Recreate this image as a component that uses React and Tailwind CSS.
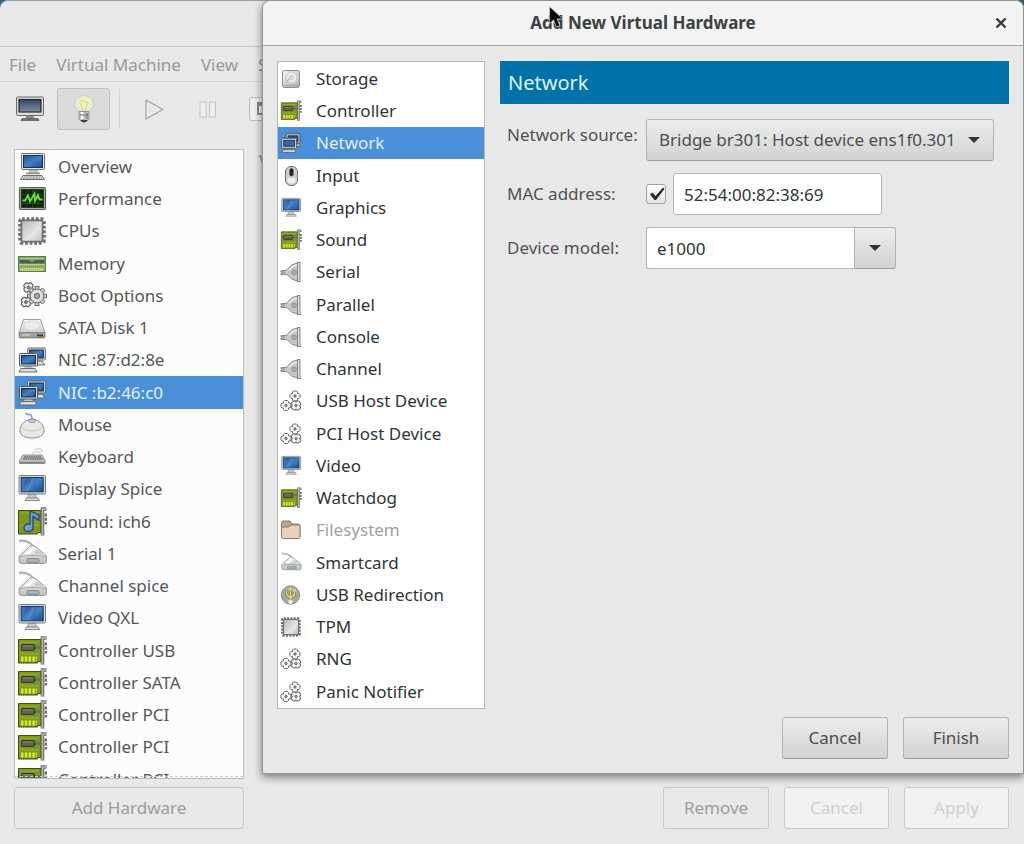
import React, { useState } from 'react';

/* ---------- Icons ---------- */

const Defs = () => (
    <svg width="0" height="0" className="absolute" aria-hidden="true">
        <defs>
            <linearGradient id="screen" x1="0" y1="0" x2="1" y2="1">
                <stop offset="0" stopColor="#1f4f93" />
                <stop offset="0.5" stopColor="#4580c4" />
                <stop offset="1" stopColor="#1d4a8c" />
            </linearGradient>
            <linearGradient id="metal" x1="0" y1="0" x2="1" y2="1">
                <stop offset="0" stopColor="#f6f6f5" />
                <stop offset="1" stopColor="#b5b6b3" />
            </linearGradient>
            <linearGradient id="chip" x1="0" y1="0" x2="1" y2="1">
                <stop offset="0" stopColor="#b4b5b3" />
                <stop offset="0.6" stopColor="#e6e6e5" />
                <stop offset="1" stopColor="#bcbdbb" />
            </linearGradient>
            <linearGradient id="shell" x1="0" y1="0" x2="0" y2="1">
                <stop offset="0" stopColor="#f2f2f2" />
                <stop offset="1" stopColor="#bfc1c1" />
            </linearGradient>
            <linearGradient id="slate" x1="0" y1="0" x2="0" y2="1">
                <stop offset="0" stopColor="#34465e" />
                <stop offset="1" stopColor="#7f8da2" />
            </linearGradient>
        </defs>
    </svg>
);

const Svg = ({ size = 28, box = 28, children }) => (
    <svg width={size} height={size} viewBox={`0 0 ${box} ${box}`} className="shrink-0 overflow-visible" aria-hidden="true">
        {children}
    </svg>
);

const ComputerIcon = () => (
    <Svg>
        <rect x="3.5" y="0.5" width="23" height="16" rx="1" fill="#dfe2e0" stroke="#6f7471" />
        <rect x="5.5" y="2.5" width="19" height="12" fill="url(#screen)" stroke="#16335f" />
        <path d="M12 17h7l1 3h-9z" fill="#c9cbc8" stroke="#888a85" strokeWidth="0.7" />
        <path d="M8 20.5h14" stroke="#8f918d" strokeWidth="1.3" />
        <path d="M5 22.5h19l2.5 4h-24z" fill="#d5d7d3" stroke="#6f716d" />
        <path d="M6 24h17M5 25.3h19" stroke="#8a8c88" strokeWidth="0.8" strokeDasharray="2 1" />
    </Svg>
);

const PerformanceIcon = () => (
    <Svg>
        <rect x="1.5" y="2.5" width="26" height="22" rx="1.5" fill="#a9aca8" stroke="#585b57" strokeWidth="1.2" />
        <rect x="3.5" y="4.5" width="22" height="18" fill="#0d2609" stroke="#2c3a29" />
        <path d="M4 9.5h21M4 14h21M4 18.5h21M9 5v17M14.5 5v17M20 5v17" stroke="#1f5a15" strokeWidth="0.7" />
        <path d="M4.500 15.500h2.500l3-5 2 6 4.500-8 .5 7.500 3-6 1.500 4.500h3" fill="none" stroke="#6fe03a" strokeWidth="1.800" />
    </Svg>
);

const ChipIcon = ({ size = 28 }) => (
    <Svg size={size}>
        <rect x="2" y="2" width="24" height="24" rx="2" fill="#cfd0ce" stroke="#70726f" strokeWidth="3.600" strokeDasharray="2.800 1.800" />
        <rect x="3.500" y="3.500" width="21" height="21" rx="1.500" fill="url(#chip)" stroke="#70726f" strokeWidth="1.600" />
    </Svg>
);

const MemoryIcon = () => (
    <Svg>
        <rect x="0.5" y="6.5" width="27" height="15" fill="#86ad68" stroke="#56804a" />
        <path d="M3 8.5h22" stroke="#a9c98a" />
        <rect x="1.500" y="10" width="25" height="3.500" fill="#4f594c" />
        <path d="M11 10h6l-3 2.500z" fill="#7fa663" />
        <path d="M1 14.500h26" stroke="#b4d492" strokeWidth="1.200" />
        <path d="M2 19.500h24" stroke="#d9d277" strokeWidth="3" strokeDasharray="1.500 .5" />
    </Svg>
);

const Gear = ({ x, y, r, teeth = 8 }) => (
    <g transform={`translate(${x} ${y})`}>
        {Array.from({ length: teeth }, (_, i) => (
            <rect
                key={i}
                x={-r * 0.2}
                y={-r}
                width={r * 0.4}
                height={r * 0.5}
                transform={`rotate(${(i * 360) / teeth})`}
                fill="#d4d5d3"
                stroke="#5a5c59"
                strokeWidth="0.9"
            />
        ))}
        <circle r={r * 0.72} fill="#dfe0de" stroke="#5a5c59" strokeWidth="0.900" />
        <circle r={r * 0.650} fill="#dfe0de" />
        <circle r={r * 0.280} fill="#a7a9a6" stroke="#5a5c59" strokeWidth="0.900" />
    </g>
);

const petals = 'M-1.500-5h3l1 1v1.500h1.500l1 1v3l-1 1h-1.500v1.500l-1 1h-3l-1-1v-1.500h-1.500l-1-1v-3l1-1h1.500v-1.500z';

const GearsIcon = () => (
    <Svg>
        <g fill="#ecedeb" stroke="#5f615e">
            <path d={petals} transform="translate(10.500 5.500) rotate(45)" strokeWidth="1.100" />
            <path d={petals} transform="translate(8 20) rotate(45)" strokeWidth="1.100" />
        </g>
        <circle cx="10.500" cy="5.500" r="1.500" fill="#9c9e9b" stroke="#5f615e" />
        <circle cx="8" cy="20" r="1.500" fill="#9c9e9b" stroke="#5f615e" />
        <Gear x={19} y={14} r={9.500} />
    </Svg>
);

const SmallGearsIcon = () => (
    <Svg size={20} box={20}>
        {[[14, 5, 0], [5, 14.5, 0], [15, 14.5, 45]].map(([x, y, turn]) => (
            <g key={x} transform={`translate(${x} ${y}) rotate(${turn})`}>
                <path d={petals} fill="#f3f3f2" stroke="#6c6e6b" strokeWidth="1" />
                <circle r="1.200" fill="#a2a4a1" stroke="#5c5e5b" strokeWidth="0.800" />
            </g>
        ))}
    </Svg>
);

const DiskIcon = () => (
    <Svg>
        <path d="M5.500 5.500h17l4.500 13v4.500q0 1-1 1h-24q-1 0-1-1v-4.500z" fill="url(#shell)" stroke="#9a9c99" />
        <path d="M1.500 18.500h25v4q0 1-1 1h-23q-1 0-1-1z" fill="#a0a29e" stroke="#7d7f7c" strokeWidth="0.800" />
        <ellipse cx="14" cy="11.500" rx="8" ry="4.500" fill="#ececeb" stroke="#cfd0ce" strokeWidth="0.700" />
        <path d="M19 21.500h6" stroke="#3c3c3c" strokeWidth="2" />
        <path d="M4 21h8" stroke="#d8d8d8" />
    </Svg>
);

const NicIcon = () => (
    <Svg>
        <path d="M17 15.500l7-.5 3 4h-9z" fill="#dcdedb" stroke="#6b6d6a" />
        <rect x="9.700" y="2" width="17.600" height="12" rx="1" fill="#dfe3dd" stroke="#5e6564" />
        <rect x="11.700" y="4" width="13.600" height="8" fill="url(#screen)" stroke="#16294c" />
        <path d="M7 20h7l1 2.500h-9z" fill="#c4c6c3" />
        <rect x="1.500" y="7.500" width="18" height="12.500" rx="1" fill="#e3e6df" stroke="#4f5655" />
        <rect x="3.500" y="9.500" width="14" height="8.500" fill="url(#screen)" stroke="#16294c" />
        <path d="M3 22.500h14l2 3.500h-18z" fill="#dddfdb" stroke="#676966" />
    </Svg>
);

const SmallNicIcon = () => (
    <Svg size={20} box={20}>
        <path d="M13 11h5l1.500 2.500h-6z" fill="#dcdedb" stroke="#55595a" strokeWidth="0.800" />
        <rect x="5" y="0.800" width="14" height="9.500" rx="0.800" fill="#d5dade" stroke="#4a5157" />
        <rect x="7" y="2.800" width="10" height="6" fill="#27508c" stroke="#16294c" strokeWidth="0.800" />
        <rect x="0.700" y="5.200" width="15" height="10" rx="0.800" fill="#e3e6df" stroke="#4a5157" />
        <rect x="2.700" y="7.200" width="11" height="6" fill="#3566a8" stroke="#16294c" strokeWidth="0.900" />
        <path d="M2 16.800h12l1 2.500h-14z" fill="#e6e7e4" stroke="#5c5e5b" strokeWidth="0.900" />
    </Svg>
);

const MouseIcon = () => (
    <Svg>
        <path d="M7.500 2q1.500 2 4 1.500t2.500 5" fill="none" stroke="#7f9fc0" strokeWidth="1.600" />
        <path d="M14 8c6 0 12 5.500 12 11s-5 8-12 8-12-2.500-12-8 6-11 12-11z" fill="#e9e9e8" stroke="#8f918e" />
        <path d="M4 17q10 6 20 0M14 8.500v3" fill="none" stroke="#c2c3c1" strokeWidth="0.900" />
        <path d="M10.500 9q3.500-2 7 0l-1 2.500h-5z" fill="#b6cbe0" stroke="#7694b4" strokeWidth="0.700" />
    </Svg>
);

const KeyboardIcon = () => (
    <Svg>
        <path d="M14 11q1-3 6-2t4-3h-8" fill="none" stroke="#c6c7c5" strokeWidth="1" />
        <path d="M5 12h19l3 5.500v3h-25.500v-3z" fill="#c2c3c1" stroke="#858784" strokeWidth="0.900" />
        <path d="M6 14h17M5 16h19.500" stroke="#6b6d6a" strokeWidth="1.400" strokeDasharray="1.800 .5" />
        <path d="M2 19.500h24.500" stroke="#858784" strokeWidth="1.600" />
    </Svg>
);

const MonitorIcon = ({ size = 28 }) => (
    <Svg size={size}>
        <path d="M10.500 19h7l1 4.500h-9z" fill="#c9cbc8" stroke="#8a8c89" strokeWidth="0.800" />
        <path d="M8.500 23h11.500l1.500 2.500h-14.500z" fill="#dcdddb" stroke="#7d7f7c" strokeWidth="0.900" />
        <rect x="1" y="0.500" width="26.500" height="18.500" rx="1.200" fill="#d5dad9" stroke="#747d80" />
        <rect x="3.200" y="2.500" width="22" height="14.300" fill="url(#screen)" stroke="#173967" />
        <path d="M8 3l-4 9v-9zM17 3l-6 13h-3l6-13z" fill="#6aa2df" opacity="0.350" />
    </Svg>
);

const CardIcon = ({ size = 28, note = false }) => (
    <Svg size={size}>
        <path d="M0.500 2.500h22.500v22h-3.500v1.500h-19z" fill="#7f981f" stroke="#3f4f12" />
        <path d="M2 5h19M2 17h19" stroke="#9ab32c" strokeWidth="1" />
        {note ? (
            <path d="M12 3l9 4v5l-6-3.500v11q0 4-4.500 4t-4.500-3.500 4-4h2z" fill="#6f9fd2" stroke="#24497c" strokeWidth="1.300" />
        ) : (
            <>
                <rect x="3.500" y="7.500" width="13" height="6" rx="0.800" fill="#5d6057" stroke="#2f3520" />
                <path d="M5 9h10" stroke="#8b8e84" />
                <path d="M17 10.500h5" stroke="#49755c" strokeWidth="2" />
                <path d="M3 22h16" stroke="#dbe836" strokeWidth="5" strokeDasharray="2.500 1.300" />
            </>
        )}
        <path d="M28.500 1h-4v26.500" fill="none" stroke="#6b6d69" strokeWidth="3.600" />
        <path d="M28.500 1h-4v26" fill="none" stroke="#b4b6b2" strokeWidth="1.500" />
        <path d="M27.800 5.500v11" stroke="#6b6d6a" strokeWidth="2.400" strokeDasharray="3 1.200" />
    </Svg>
);

const ModemIcon = ({ size = 28 }) => (
    <Svg size={size}>
        <path d="M1 1q8-1 12 3t6 7" fill="none" stroke="#b4b6b5" strokeWidth="2.400" />
        <path d="M12 6q3-1.500 6 1l8.500 7q2 1.500 2 4v3q0 2.500-2.500 2.500h-22.500q-2.500 0-2.500-2.500v-3q0-2.500 2-3.500z" fill="url(#shell)" stroke="#989a99" />
        <path d="M1.500 17q13-3 26.500 0" fill="none" stroke="#a2a5a6" strokeWidth="1.200" />
        <path d="M13.500 8l2.500 1.500-4 4.500-7 .5z" fill="#fafafa" />
        <path d="M18 9q5 3 7 5.500l-8-.5z" fill="#c9cbcb" />
        <rect x="9" y="18.500" width="12" height="4" rx="1" fill="#a3b1c0" stroke="#7b8894" strokeWidth="0.900" />
    </Svg>
);

const StorageIcon = () => (
    <Svg size={20} box={20}>
        <rect x="1.500" y="1.500" width="17" height="17" rx="2" fill="url(#metal)" stroke="#8b8d8a" />
        <circle cx="10.500" cy="8.500" r="5.500" fill="#ededec" stroke="#c6c7c5" />
        <circle cx="10.500" cy="8.500" r="2" fill="#dcdddb" stroke="#b5b5b5" strokeWidth="0.700" />
        <path d="M5 13.500l3.500-4" stroke="#b5b5b5" strokeWidth="1.200" />
        <path d="M3 16.500h14" stroke="#a5a6a4" strokeWidth="1.500" />
    </Svg>
);

const InputIcon = () => (
    <Svg size={20} box={20}>
        <rect x="4.500" y="0.500" width="12" height="19" rx="5.500" fill="#cfd0ce" stroke="#6d6f6c" />
        <path d="M6.500 12v2q0 3.500 4 3.500t4-3.500v-2z" fill="#f1f1f0" />
        <rect x="8.700" y="2.500" width="3.600" height="7.500" rx="1.600" fill="#1e1e1e" stroke="#5d5f5c" strokeWidth="0.700" />
    </Svg>
);

const PlugIcon = () => (
    <Svg size={20} box={20}>
        <path d="M0 8.500h5l1.500-1.500q4-5.500 10-6v18q-6-.5-10-6l-1.500-.5h-5v-1.500h3.500v-1h-3.500z" fill="#c6c7c5" stroke="#8b8d8a" />
        <path d="M8 8q4-4.500 8-5" fill="none" stroke="#efefee" strokeWidth="1.400" />
        <circle cx="13" cy="10.500" r="2.500" fill="#a9aba8" stroke="#8b8d8a" strokeWidth="0.700" />
        <rect x="16.500" y="0.500" width="2.500" height="19" fill="#dcdddb" stroke="#858784" />
    </Svg>
);

const FolderIcon = () => (
    <Svg size={20} box={20}>
        <path d="M0.500 16.500v-14q0-1.500 1.500-1.500h7l2 3h6.500q1.500 0 1.500 1.500v11z" fill="#b9a588" stroke="#8d7c66" />
        <path d="M0.500 8.500q0-1.500 1.500-1.500h6l2-2h7.500q1.500 0 1.500 1.500v10.500q0 1.500-1.500 1.500h-15.500q-1.500 0-1.500-1.500z" fill="#e5d2b8" stroke="#907e68" />
    </Svg>
);

const UsbIcon = () => (
    <Svg size={20} box={20}>
        <circle cx="9.500" cy="10" r="9.200" fill="#a7a8a2" stroke="#8a8b86" />
        <path d="M9.500 4v12.500M5.500 5.500v4l4 3.500M13.500 5v4.500l-4 3.500" fill="none" stroke="#7a7443" strokeWidth="3" />
        <path d="M9.500 4v12.500M5.500 5.500v4l4 3.500M13.500 5v4.500l-4 3.500" fill="none" stroke="#ddd07a" strokeWidth="1.700" />
        <path d="M9.500 1.500l2.200 3.500h-4.400z" fill="#ddd07a" />
        <circle cx="9.500" cy="16.800" r="2.200" fill="#f6f3da" />
        <path d="M12 4h3v2.500h-3z" fill="#ddd07a" />
    </Svg>
);

const ConsoleIcon = () => (
    <Svg>
        <rect x="0.500" y="2" width="27" height="18.500" rx="1" fill="#dcdddb" stroke="#6b6d6a" />
        <rect x="3" y="4.500" width="22" height="12.500" fill="url(#slate)" stroke="#262d38" strokeWidth="1.200" />
        <path d="M10 21h8v2.500h-8z" fill="#8b8d8a" />
        <path d="M6 23.500h16l1 2h-18z" fill="#70726f" stroke="#565855" strokeWidth="0.700" />
    </Svg>
);

const BulbIcon = () => (
    <Svg>
        <path d="M14 0.500c5.500 0 9.500 4 9.500 8.500 0 4-3 5.500-4.500 8h-10c-1.500-2.500-4.500-4-4.500-8 0-4.500 4-8.500 9.500-8.500z" fill="#e8e8dd" stroke="#c6c6bb" strokeWidth="0.900" />
        <circle cx="14" cy="8" r="5.500" fill="#f5f4b0" />
        <path d="M10 6.500q2-2 4 0t4 0M10.500 8l2.500 8M17.500 8l-2.500 8" fill="none" stroke="#cdc98e" strokeWidth="0.900" />
        <path d="M9 16.500h10v7q0 2.500-5 2.500t-5-2.500z" fill="#bfc0be" stroke="#858784" strokeWidth="0.800" />
        <path d="M12 17v7" stroke="#fafafa" strokeWidth="2.500" />
        <path d="M17 18v6M10 20h8" stroke="#6d6f6c" strokeWidth="1" />
        <path d="M10.500 25h7q-1 2.500-3.500 2.500t-3.500-2.500z" fill="#3d3f3c" />
    </Svg>
);

const PlayIcon = () => (
    <Svg>
        <path d="M6 5l17 9.500-17 9.500z" fill="#e4e4e3" stroke="#a2a39f" strokeWidth="1.200" strokeLinejoin="round" />
        <path d="M8 8.500l11 6-11 6z" fill="none" stroke="#f6f6f5" />
    </Svg>
);

const PauseIcon = () => (
    <Svg>
        <rect x="6" y="7" width="6" height="15" fill="#efefee" stroke="#c2c3c1" />
        <rect x="15.500" y="7" width="6" height="15" fill="#efefee" stroke="#c2c3c1" />
    </Svg>
);

const Caret = () => (
    <svg width="12" height="6" viewBox="0 0 12 6" aria-hidden="true">
        <path d="M0 0h12l-6 6z" fill="#2e3436" />
    </svg>
);

/* ---------- Data ---------- */

const devices = [
    { label: 'Overview', icon: <ComputerIcon /> },
    { label: 'Performance', icon: <PerformanceIcon /> },
    { label: 'CPUs', icon: <ChipIcon /> },
    { label: 'Memory', icon: <MemoryIcon /> },
    { label: 'Boot Options', icon: <GearsIcon /> },
    { label: 'SATA Disk 1', icon: <DiskIcon /> },
    { label: 'NIC :87:d2:8e', icon: <NicIcon /> },
    { label: 'NIC :b2:46:c0', icon: <NicIcon /> },
    { label: 'Mouse', icon: <MouseIcon /> },
    { label: 'Keyboard', icon: <KeyboardIcon /> },
    { label: 'Display Spice', icon: <MonitorIcon /> },
    { label: 'Sound: ich6', icon: <CardIcon note /> },
    { label: 'Serial 1', icon: <ModemIcon /> },
    { label: 'Channel spice', icon: <ModemIcon /> },
    { label: 'Video QXL', icon: <MonitorIcon /> },
    { label: 'Controller USB', icon: <CardIcon /> },
    { label: 'Controller SATA', icon: <CardIcon /> },
    { label: 'Controller PCI', icon: <CardIcon /> },
    { label: 'Controller PCI', icon: <CardIcon /> },
    { label: 'Controller PCI', icon: <CardIcon /> },
];

const hardware = [
    { label: 'Storage', icon: <StorageIcon /> },
    { label: 'Controller', icon: <CardIcon size={20} /> },
    { label: 'Network', icon: <SmallNicIcon /> },
    { label: 'Input', icon: <InputIcon /> },
    { label: 'Graphics', icon: <MonitorIcon size={20} /> },
    { label: 'Sound', icon: <CardIcon size={20} /> },
    { label: 'Serial', icon: <PlugIcon /> },
    { label: 'Parallel', icon: <PlugIcon /> },
    { label: 'Console', icon: <PlugIcon /> },
    { label: 'Channel', icon: <PlugIcon /> },
    { label: 'USB Host Device', icon: <SmallGearsIcon /> },
    { label: 'PCI Host Device', icon: <SmallGearsIcon /> },
    { label: 'Video', icon: <MonitorIcon size={20} /> },
    { label: 'Watchdog', icon: <CardIcon size={20} /> },
    { label: 'Filesystem', icon: <FolderIcon />, disabled: true },
    { label: 'Smartcard', icon: <ModemIcon size={20} /> },
    { label: 'USB Redirection', icon: <UsbIcon /> },
    { label: 'TPM', icon: <ChipIcon size={20} /> },
    { label: 'RNG', icon: <SmallGearsIcon /> },
    { label: 'Panic Notifier', icon: <SmallGearsIcon /> },
];

/* ---------- Parts ---------- */

const ItemList = ({ items, selected, onSelect, gap, text }) => (
    <ul className="pt-px">
        {items.map((item, i) => (
            <li key={i} className="h-8 nth-[4n]:h-[33px]">
                <button
                    disabled={item.disabled}
                    onClick={() => onSelect(i)}
                    className={`flex h-full w-full items-center whitespace-nowrap pl-[3px] text-left ${gap} ${i === selected ? 'bg-[#4a90d9] text-[#e4f1ff]' : text} disabled:text-[#a0a2a0]`}
                >
                    {item.icon}
                    {item.label}
                </button>
            </li>
        ))}
    </ul>
);

const raised = 'rounded-[3px] border border-[#b4b4b0] border-b-[#9c9c98] bg-linear-to-b from-[#ededed] to-[#d2d2d2] text-[#4b4e4e]';
const flat = 'h-[42px] rounded-[3px] border border-[#c8c8c5]';

const MainWindow = () => {
    const [device, setDevice] = useState(7);

    return (
        <div className="flex h-full flex-col overflow-hidden rounded-t-lg border-t border-[#9a9f9f] bg-[#e8e8e8] text-[#555758]">
            <div className="h-[46px] shrink-0 border-b border-[#c6c6c3]" />
            <nav className="flex h-[35px] shrink-0 items-center gap-5 border-b border-[#d3d3d0] pl-[9px] pt-0.5 text-[#979997]">
                <button>File</button>
                <button>Virtual Machine</button>
                <button>View</button>
                <button>S</button>
            </nav>
            <div className="flex h-[53px] shrink-0 items-center pl-4">
                <button aria-label="Console"><ConsoleIcon /></button>
                <button aria-label="Details" className="ml-[13px] flex h-[42px] w-[53px] items-center justify-center rounded-[3px] border border-[#c0c0bd] bg-[#dadada]">
                    <BulbIcon />
                </button>
                <div className="ml-[9px] h-10 w-px bg-[#d2d2cf]" />
                <button aria-label="Run" className="ml-5"><PlayIcon /></button>
                <button aria-label="Pause" className="ml-[26px]"><PauseIcon /></button>
                <button aria-label="Shut down" className="ml-[27px] flex h-6 w-8 items-center rounded-[3px] border border-[#bdbdba] bg-[#efefee] pl-[7px]">
                    <span className="h-[13px] w-4 border-2 border-t-4 border-[#8a8c8a]" />
                </button>
            </div>
            <div className="flex min-h-0 flex-1 gap-[15px] px-[14px] pt-[14px]">
                <div className="relative w-[230px] shrink-0 overflow-hidden border border-[#bcbcb9] bg-[#fcfcfc]">
                    <ItemList items={devices} selected={device} onSelect={setDevice} gap="gap-3" text="text-[#555758]" />
                    <div className="absolute inset-x-0 bottom-px border-t border-dashed border-[#c9c9c7]" />
                </div>
                <h2 className="leading-6 text-[#8a8c8a]">V</h2>
            </div>
            <div className="flex shrink-0 justify-between px-[14px] pb-[15px] pt-2">
                <button className={`${flat} w-[230px] text-[#9b9c9a]`}>Add Hardware</button>
                <div className="flex gap-[15px] pr-px">
                    <button className={`${flat} w-[106px] text-[#9b9c9a]`}>Remove</button>
                    <button disabled className={`${flat} w-[105px] bg-[#f1f1f1] text-[#cfcfce]`}>Cancel</button>
                    <button disabled className={`${flat} w-[105px] bg-[#f1f1f1] text-[#cfcfce]`}>Apply</button>
                </div>
            </div>
        </div>
    );
};

const NetworkForm = () => {
    const [custom, setCustom] = useState(true);

    return (
        <section className="min-w-0 flex-1 text-[#4f5253]">
            <h2 className="flex h-[43px] items-center bg-[#0072a9] pl-2 text-xl text-[#def4ff]">Network</h2>
            <div className="mt-[15px] grid grid-cols-[139px_1fr] gap-y-3 pl-[7px]">
                <label htmlFor="source" className="pt-1">Network source:</label>
                <div className="relative w-[348px]">
                    <select id="source" className={`h-[42px] w-full appearance-none pl-3 ${raised}`}>
                        <option>Bridge br301: Host device ens1f0.301</option>
                    </select>
                    <span className="pointer-events-none absolute inset-y-0 right-[14px] flex items-center"><Caret /></span>
                </div>

                <label htmlFor="mac" className="self-center">MAC address:</label>
                <div className="flex items-center gap-[7px]">
                    <div className="relative h-5 w-5">
                        <input
                            type="checkbox"
                            aria-label="Custom MAC address"
                            checked={custom}
                            onChange={() => setCustom(!custom)}
                            className="block h-5 w-5 appearance-none rounded-[3px] border border-[#a2a29f] bg-linear-to-b from-white to-[#e4e4e4]"
                        />
                        {custom && (
                            <svg viewBox="0 0 20 20" className="pointer-events-none absolute inset-0" aria-hidden="true">
                                <path d="M4 10.500l2.500-2 3 3.500 7.500-8.500 1.500 1.500-8.500 11h-1.500z" fill="#2a2d2e" />
                            </svg>
                        )}
                    </div>
                    <input id="mac" defaultValue="52:54:00:82:38:69" className="h-[42px] w-[209px] rounded-[3px] border border-[#b8b8b5] bg-white px-[10px] text-[#2e3436]" />
                </div>

                <label htmlFor="model" className="self-center">Device model:</label>
                <div className="flex">
                    <input id="model" defaultValue="e1000" className="h-[42px] w-[208px] rounded-l-[3px] border border-r-0 border-[#b8b8b5] bg-white px-[10px] text-[#2e3436]" />
                    <button aria-label="Choose device model" className={`flex w-[42px] items-center justify-center rounded-l-none ${raised}`}>
                        <Caret />
                    </button>
                </div>
            </div>
        </section>
    );
};

const AddHardwareDialog = () => {
    const [kind, setKind] = useState(2);

    return (
        <div role="dialog" aria-labelledby="dialog-title" className="absolute left-[262px] right-0 top-0 rounded-t-lg border border-[#92928f] bg-[#e8e8e8] shadow-[0_3px_8px_rgba(0,0,0,0.5)]">
            <header className="relative flex h-[45px] items-center justify-center rounded-t-lg border-b border-[#a6a6a3] bg-[#f3f3f3] text-[#3d4142]">
                <h1 id="dialog-title" className="font-bold">Add New Virtual Hardware</h1>
                <button aria-label="Close" className="absolute right-4">
                    <svg width="12" height="12" viewBox="0 0 12 12" aria-hidden="true">
                        <path d="M1.500 1.500l9 9M10.500 1.500l-9 9" stroke="#33383a" strokeWidth="2.400" />
                    </svg>
                </button>
            </header>
            <div className="px-[14px] pb-[14px] pt-[15px]">
                <div className="flex gap-[15px]">
                    <div className="w-[208px] shrink-0 border border-[#b8b8b5] bg-white">
                        <ItemList items={hardware} selected={kind} onSelect={setKind} gap="gap-[15px]" text="text-[#2e3436]" />
                    </div>
                    <NetworkForm />
                </div>
                <div className="mt-2 flex justify-end gap-[15px]">
                    <button className={`h-[42px] w-[106px] ${raised}`}>Cancel</button>
                    <button className={`h-[42px] w-[106px] ${raised}`}>Finish</button>
                </div>
            </div>
        </div>
    );
};

export default function App() {
    return (
        <div className="relative h-screen overflow-hidden bg-[#2f6378] font-['Noto_Sans',sans-serif] text-[17px] leading-6">
            <Defs />
            <MainWindow />
            <AddHardwareDialog />
            <svg width="15" height="22" viewBox="0 0 15 22" className="pointer-events-none absolute left-[549px] top-[6px]" aria-hidden="true">
                <path d="M0.500 0.500v17l4-3.500 3 7 3.500-1.500-3-6.500h6z" fill="#0b0b0b" stroke="#d8d8d8" strokeWidth="0.700" />
            </svg>
        </div>
    );
}
